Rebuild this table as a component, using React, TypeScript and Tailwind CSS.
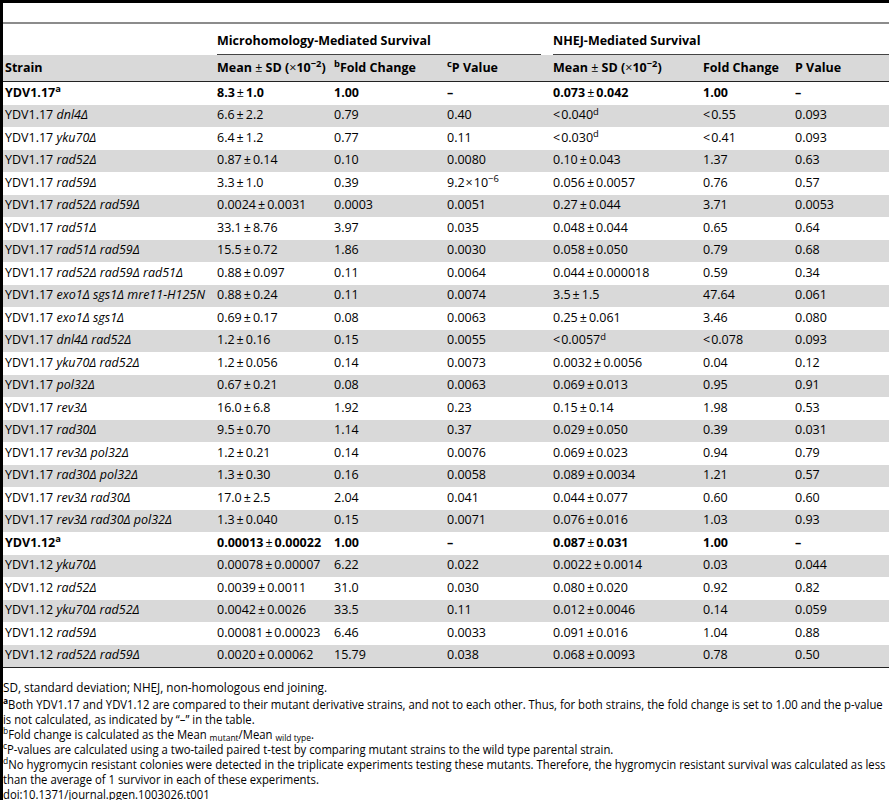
import React from "react";

type Row = {
  strain: string;
  mut?: string;
  bold?: boolean;
  cells: React.ReactNode[];
};

const cols = "grid grid-cols-[212px_117px_113px_106px_150px_92px_1fr]";

// the ± of the source table sits a little apart from its digits
const fmt = (c: React.ReactNode) => {
  if (typeof c !== "string" || !c.includes("±")) return c;
  const [a, b] = c.split("±");
  return (
    <span>
      {a}
      <span className="px-[2px] font-normal">±</span>
      {b}
    </span>
  );
};

const lt = (v: string, d?: boolean) => (
  <span>
    <span className="pr-[1px]">&lt;</span>
    {v}
    {d && <sup>d</sup>}
  </span>
);

const rows: Row[] = [
  { strain: "YDV1.17", bold: true, cells: ["8.3±1.0", "1.00", "–", "0.073±0.042", "1.00", "–"] },
  { strain: "YDV1.17", mut: "dnl4Δ", cells: ["6.6±2.2", "0.79", "0.40", lt("0.040", true), lt("0.55"), "0.093"] },
  { strain: "YDV1.17", mut: "yku70Δ", cells: ["6.4±1.2", "0.77", "0.11", lt("0.030", true), lt("0.41"), "0.093"] },
  { strain: "YDV1.17", mut: "rad52Δ", cells: ["0.87±0.14", "0.10", "0.0080", "0.10±0.043", "1.37", "0.63"] },
  {
    strain: "YDV1.17",
    mut: "rad59Δ",
    cells: [
      "3.3±1.0",
      "0.39",
      <span>
        9.2<span className="px-[1px]">×</span>10<sup>−6</sup>
      </span>,
      "0.056±0.0057",
      "0.76",
      "0.57",
    ],
  },
  { strain: "YDV1.17", mut: "rad52Δ rad59Δ", cells: ["0.0024±0.0031", "0.0003", "0.0051", "0.27±0.044", "3.71", "0.0053"] },
  { strain: "YDV1.17", mut: "rad51Δ", cells: ["33.1±8.76", "3.97", "0.035", "0.048±0.044", "0.65", "0.64"] },
  { strain: "YDV1.17", mut: "rad51Δ rad59Δ", cells: ["15.5±0.72", "1.86", "0.0030", "0.058±0.050", "0.79", "0.68"] },
  { strain: "YDV1.17", mut: "rad52Δ rad59Δ rad51Δ", cells: ["0.88±0.097", "0.11", "0.0064", "0.044±0.000018", "0.59", "0.34"] },
  { strain: "YDV1.17", mut: "exo1Δ sgs1Δ mre11-H125N", cells: ["0.88±0.24", "0.11", "0.0074", "3.5±1.5", "47.64", "0.061"] },
  { strain: "YDV1.17", mut: "exo1Δ sgs1Δ", cells: ["0.69±0.17", "0.08", "0.0063", "0.25±0.061", "3.46", "0.080"] },
  { strain: "YDV1.17", mut: "dnl4Δ rad52Δ", cells: ["1.2±0.16", "0.15", "0.0055", lt("0.0057", true), lt("0.078"), "0.093"] },
  { strain: "YDV1.17", mut: "yku70Δ rad52Δ", cells: ["1.2±0.056", "0.14", "0.0073", "0.0032±0.0056", "0.04", "0.12"] },
  { strain: "YDV1.17", mut: "pol32Δ", cells: ["0.67±0.21", "0.08", "0.0063", "0.069±0.013", "0.95", "0.91"] },
  { strain: "YDV1.17", mut: "rev3Δ", cells: ["16.0±6.8", "1.92", "0.23", "0.15±0.14", "1.98", "0.53"] },
  { strain: "YDV1.17", mut: "rad30Δ", cells: ["9.5±0.70", "1.14", "0.37", "0.029±0.050", "0.39", "0.031"] },
  { strain: "YDV1.17", mut: "rev3Δ pol32Δ", cells: ["1.2±0.21", "0.14", "0.0076", "0.069±0.023", "0.94", "0.79"] },
  { strain: "YDV1.17", mut: "rad30Δ pol32Δ", cells: ["1.3±0.30", "0.16", "0.0058", "0.089±0.0034", "1.21", "0.57"] },
  { strain: "YDV1.17", mut: "rev3Δ rad30Δ", cells: ["17.0±2.5", "2.04", "0.041", "0.044±0.077", "0.60", "0.60"] },
  { strain: "YDV1.17", mut: "rev3Δ rad30Δ pol32Δ", cells: ["1.3±0.040", "0.15", "0.0071", "0.076±0.016", "1.03", "0.93"] },
  { strain: "YDV1.12", bold: true, cells: ["0.00013±0.00022", "1.00", "–", "0.087±0.031", "1.00", "–"] },
  { strain: "YDV1.12", mut: "yku70Δ", cells: ["0.00078±0.00007", "6.22", "0.022", "0.0022±0.0014", "0.03", "0.044"] },
  { strain: "YDV1.12", mut: "rad52Δ", cells: ["0.0039±0.0011", "31.0", "0.030", "0.080±0.020", "0.92", "0.82"] },
  { strain: "YDV1.12", mut: "yku70Δ rad52Δ", cells: ["0.0042±0.0026", "33.5", "0.11", "0.012±0.0046", "0.14", "0.059"] },
  { strain: "YDV1.12", mut: "rad59Δ", cells: ["0.00081±0.00023", "6.46", "0.0033", "0.091±0.016", "1.04", "0.88"] },
  { strain: "YDV1.12", mut: "rad52Δ rad59Δ", cells: ["0.0020±0.00062", "15.79", "0.038", "0.068±0.0093", "0.78", "0.50"] },
];

const MeanHead = () => (
  <span>
    Mean <span className="font-normal">±</span> SD (<span className="font-normal">×</span>10<sup>−2</sup>)
  </span>
);

export default function App() {
  return (
    <div className="w-[889px] h-[800px] overflow-hidden bg-white border-l-[3px] border-black font-['Open_Sans',sans-serif] text-black">
      <div className="h-[3px] bg-black" />
      <div className="h-[19px]" />
      <div className="h-[2px] bg-[#8c8c8c]" />

      {/* spanning group headers */}
      <div className={`${cols} h-[31px] items-center pl-[2px] text-[12.5px] font-bold`}>
        <div />
        <div className="col-span-3 h-full flex items-center pt-[4px] mr-[12px] border-b border-[#444]">
          Microhomology-Mediated Survival
        </div>
        <div className="col-span-3 h-full flex items-center pt-[4px] border-b border-[#444]">
          NHEJ-Mediated Survival
        </div>
      </div>

      <div className={`${cols} h-[27px] items-center pl-[2px] bg-[#d9d9d9] text-[12.5px] font-bold border-b border-[#222]`}>
        <div>Strain</div>
        <MeanHead />
        <div>
          <sup>b</sup>Fold Change
        </div>
        <div>
          <sup>c</sup>P Value
        </div>
        <MeanHead />
        <div>Fold Change</div>
        <div>P Value</div>
      </div>

      <div className="border-b border-[#222]">
        {rows.map((r, i) => (
          <div
            key={i}
            className={`${cols} h-[22.5px] items-center pl-[2px] text-[12.5px] whitespace-nowrap ${
              i % 2 ? "bg-[#d9d9d9]" : ""
            } ${r.bold ? "font-bold" : ""}`}
          >
            <div>
              {r.strain}
              {r.bold && <sup>a</sup>}
              {r.mut && <i> {r.mut}</i>}
            </div>
            {r.cells.map((c, j) => (
              <div key={j}>{fmt(c)}</div>
            ))}
          </div>
        ))}
      </div>

      <div className="mt-[10px] text-[12.5px] leading-[15px] whitespace-nowrap">
        <div className="h-[19px] leading-[19px] origin-left scale-x-[0.94]">
          SD, standard deviation; NHEJ, non-homologous end joining.
        </div>
        <div className="origin-left scale-x-[0.905]">
          <div>
            <sup className="font-bold">a</sup>Both YDV1.17 and YDV1.12 are compared to their mutant derivative strains, and not
            to each other. Thus, for both strains, the fold change is set to 1.00 and the p-value
          </div>
          <div>is not calculated, as indicated by “–” in the table.</div>
          <div>
            <sup>b</sup>Fold change is calculated as the Mean <sub>mutant</sub>/Mean <sub>wild type</sub>.
          </div>
          <div>
            <sup>c</sup>P-values are calculated using a two-tailed paired t-test by comparing mutant strains to the wild type
            parental strain.
          </div>
          <div>
            <sup>d</sup>No hygromycin resistant colonies were detected in the triplicate experiments testing these mutants.
            Therefore, the hygromycin resistant survival was calculated as less
          </div>
          <div>than the average of 1 survivor in each of these experiments.</div>
          <div>doi:10.1371/journal.pgen.1003026.t001</div>
        </div>
      </div>
    </div>
  );
}
